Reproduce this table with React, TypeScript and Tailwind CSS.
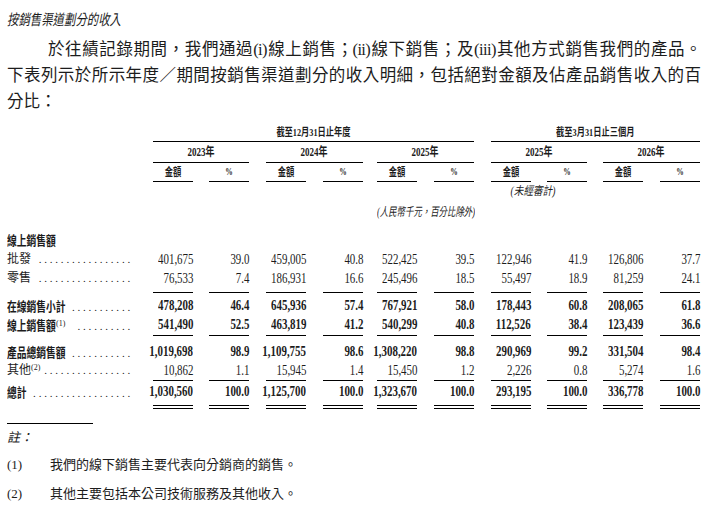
const SERIF = "font-['Liberation_Serif','Noto_Sans_CJK_TC',serif]";

type Row = {
  label: string;
  sup?: string;
  bold?: boolean;
  lw?: string;
  dots: number;
  vals: string[];
  row: string;
  line?: "single" | "double";
};

const rows: Row[] = [
  { label: "批發", dots: 17, vals: ["401,675", "39.0", "459,005", "40.8", "522,425", "39.5", "122,946", "41.9", "126,806", "37.7"], row: "h-[19px]" },
  { label: "零售", dots: 17, vals: ["76,533", "7.4", "186,931", "16.6", "245,496", "18.5", "55,497", "18.9", "81,259", "24.1"], row: "h-[24px]", line: "single" },
  { label: "在線銷售小計", bold: true, lw: "w-[59px]", dots: 11, vals: ["478,208", "46.4", "645,936", "57.4", "767,921", "58.0", "178,443", "60.8", "208,065", "61.8"], row: "mt-[3px] h-[19px]" },
  { label: "線上銷售額", sup: "(1)", bold: true, lw: "w-[49px]", dots: 10, vals: ["541,490", "52.5", "463,819", "41.2", "540,299", "40.8", "112,526", "38.4", "123,439", "36.6"], row: "h-[21px]", line: "single" },
  { label: "產品總銷售額", bold: true, lw: "w-[59px]", dots: 11, vals: ["1,019,698", "98.9", "1,109,755", "98.6", "1,308,220", "98.8", "290,969", "99.2", "331,504", "98.4"], row: "mt-[6px] h-[19px]" },
  { label: "其他", sup: "(2)", dots: 16, vals: ["10,862", "1.1", "15,945", "1.4", "15,450", "1.2", "2,226", "0.8", "5,274", "1.6"], row: "h-[20px]", line: "single" },
  { label: "總計", bold: true, lw: "w-[20px]", dots: 18, vals: ["1,030,560", "100.0", "1,125,700", "100.0", "1,323,670", "100.0", "293,195", "100.0", "336,778", "100.0"], row: "mt-[1px] h-[27px]", line: "double" },
];

// five column groups: 2023, 2024, 2025 (year) + 2025, 2026 (three months)
const blocks = ["w-[96px]", "ml-[17px] w-[97px]", "ml-[14px] w-[97px]", "ml-[17px] w-[96px]", "ml-[16px] w-[97px]"];
const years = ["2023年", "2024年", "2025年", "2025年", "2026年"];

function Cond({ children, size = "text-[11px]" }: { children: React.ReactNode; size?: string }) {
  return <span className={`inline-block whitespace-nowrap font-bold scale-x-75 ${size}`}>{children}</span>;
}

function Num({ v, bold, line }: { v: string; bold?: boolean; line?: Row["line"] }) {
  const lineCls =
    line === "single" ? "border-b border-black" : line === "double" ? "border-b-[4px] border-double border-black" : "";
  return (
    <div className={`flex w-[40px] justify-end text-[14px] leading-[19px] ${bold ? "font-bold" : ""} ${lineCls}`}>
      <span className="inline-block origin-right scale-x-[0.78] whitespace-nowrap">{v}</span>
    </div>
  );
}

function Label({ r }: { r: Row }) {
  return (
    <div className="flex w-[146px] items-baseline pr-[20px] leading-[19px]">
      {r.bold ? (
        <span className={`inline-block shrink-0 whitespace-nowrap ${r.lw}`}>
          <span className="inline-block origin-left scale-x-75 text-[13px] font-bold">{r.label}</span>
        </span>
      ) : (
        <span className="shrink-0 whitespace-nowrap text-[12px]">{r.label}</span>
      )}
      {r.sup && <sup className="shrink-0 text-[8px]">{r.sup}</sup>}
      <span className="flex-1 overflow-hidden whitespace-nowrap text-right text-[11px] tracking-[2.8px]">
        {".".repeat(r.dots)}
      </span>
    </div>
  );
}

export default function App() {
  return (
    <div className={`min-h-[505px] w-[708px] bg-white px-[7px] text-[#1c1c1c] ${SERIF}`}>
      <div className="h-[28px] pt-[8px]">
        <span className="inline-block origin-left scale-x-[0.76] text-[15px] italic leading-[20px]">按銷售渠道劃分的收入</span>
      </div>

      <div className="mt-[9px] text-[16.5px] leading-[26px]">
        <p className="pl-[41px] text-justify tracking-[-0.6px] [text-align-last:justify]">
          於往績記錄期間，我們通過(i)線上銷售；(ii)線下銷售；及(iii)其他方式銷售我們的產品。
        </p>
        <p className="text-justify [text-align-last:justify]">
          下表列示於所示年度／期間按銷售渠道劃分的收入明細，包括絕對金額及佔產品銷售收入的百
        </p>
        <p>分比：</p>
      </div>

      {/* table header */}
      <div className="mt-[9px] flex h-[18px]">
        <div className="w-[146px]" />
        <div className="flex w-[321px] justify-center border-b border-black leading-[17px]">
          <Cond>截至12月31日止年度</Cond>
        </div>
        <div className="ml-[17px] flex w-[209px] justify-center border-b border-black leading-[17px]">
          <Cond>截至3月31日止三個月</Cond>
        </div>
      </div>
      <div className="flex h-[21px]">
        <div className="w-[146px]" />
        {blocks.map((b, i) => (
          <div key={i} className={`flex justify-center border-b border-black leading-[20px] ${b}`}>
            <Cond size="text-[12px]">{years[i]}</Cond>
          </div>
        ))}
      </div>
      <div className="flex h-[19px]">
        <div className="w-[146px]" />
        {blocks.map((b, i) => (
          <div key={i} className={`flex justify-between ${b}`}>
            <div className="flex w-[40px] justify-center border-b border-black leading-[18px]">
              <Cond>金額</Cond>
            </div>
            <div className="flex w-[40px] justify-center border-b border-black leading-[18px]">
              <Cond size="text-[10px]">%</Cond>
            </div>
          </div>
        ))}
      </div>
      <div className="mt-[1px] flex h-[37px] items-start">
        <div className="w-[146px]" />
        <div className="w-[96px]" />
        <div className="ml-[17px] w-[97px]" />
        <div className="ml-[14px] flex w-[97px] justify-center pt-[21px] leading-[16px]">
          <span className="inline-block shrink-0 scale-x-[0.7] whitespace-nowrap text-[12px] italic">(人民幣千元，百分比除外)</span>
        </div>
        <div className="ml-[17px] flex w-[96px] justify-center pr-[12px] leading-[16px]">
          <span className="inline-block shrink-0 scale-x-[0.8] whitespace-nowrap text-[12px] italic">(未經審計)</span>
        </div>
      </div>

      {/* table body */}
      <div className="mt-[11px] flex h-[19px] items-baseline leading-[19px]">
        <span className="inline-block origin-left scale-x-75 whitespace-nowrap text-[13px] font-bold">線上銷售額</span>
      </div>
      {rows.map((r) => (
        <div key={r.label + (r.sup ?? "")} className={`flex ${r.row}`}>
          <Label r={r} />
          {blocks.map((b, i) => (
            <div key={i} className={`flex justify-between ${b}`}>
              <Num v={r.vals[i * 2]} bold={r.bold} line={r.line} />
              <Num v={r.vals[i * 2 + 1]} bold={r.bold} line={r.line} />
            </div>
          ))}
        </div>
      ))}

      {/* notes */}
      <div className="mt-[14px] w-[86px] border-t border-black" />
      <div className="mt-[5px] text-[13px] italic leading-[18px]">註：</div>
      <div className="mt-[9px] flex text-[13px] leading-[18px]">
        <span className="w-[43px] shrink-0">(1)</span>
        <span>我們的線下銷售主要代表向分銷商的銷售。</span>
      </div>
      <div className="mt-[11px] flex text-[13px] leading-[18px]">
        <span className="w-[43px] shrink-0">(2)</span>
        <span>其他主要包括本公司技術服務及其他收入。</span>
      </div>
    </div>
  );
}
